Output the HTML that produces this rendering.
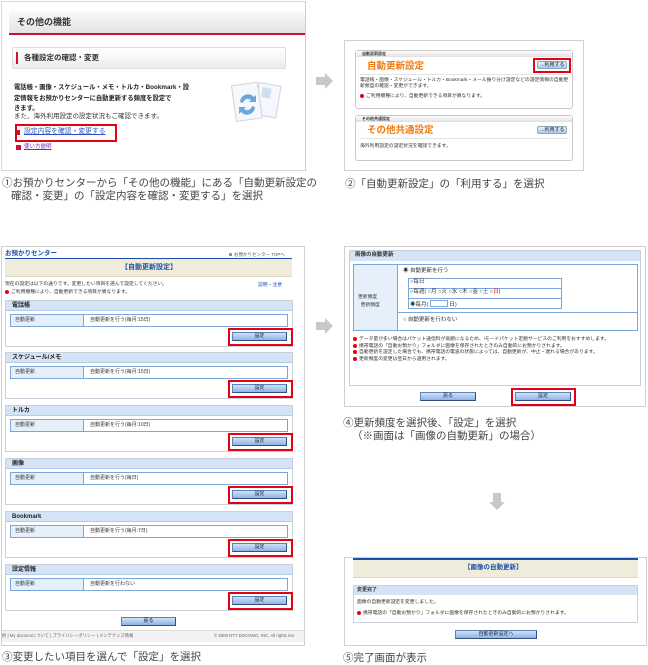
<!DOCTYPE html>
<html><head><meta charset="utf-8"><style>
*{margin:0;padding:0;box-sizing:border-box}
body{width:648px;height:663px;background:#fff;position:relative;overflow:hidden;font-family:"Liberation Sans","Noto Sans CJK JP",sans-serif;color:#333}
.a{position:absolute}
.t{position:absolute;white-space:nowrap;line-height:1}
.cap{font-size:10.5px;color:#444;line-height:13px}
.red{border:2px solid #e60012}
.btn{position:absolute;height:9px;background:linear-gradient(#cfe1f7,#8fb4e4);border:1px solid #5d83b8;border-right-color:#33507a;border-bottom-color:#33507a;font-size:5px;text-align:center;line-height:7px;color:#223}
.sec{position:absolute;left:5px;width:288px;height:47px;border:1px solid #c8d0dc;background:#fff}
.sec .h{height:10px;background:#d4e3f6;font-size:6px;font-weight:bold;line-height:10px;padding-left:6px;color:#222;border-bottom:1px solid #b8cbe6}
.sec .r{position:absolute;left:4px;top:13px;width:278px;height:13px;border:1px solid #7aa6d8;font-size:5px;line-height:11px}
.sec .r span{display:inline-block;width:73px;height:11px;background:#e6f0fb;border-right:1px solid #7aa6d8;padding-left:4px;margin-right:6px}
.ex{display:inline-block;width:6px;height:6px;border-radius:50%;background:#e60012;vertical-align:-1px;margin-right:2px}
</style></head><body>

<!-- Panel 1 -->
<div class="a" style="left:1px;top:1px;width:305px;height:170px;border:1px solid #d8d8d8;border-right-color:#ccc"></div>
<div class="a" style="left:9px;top:11px;width:296px;height:24px;background:linear-gradient(#fafafa,#e4e4e4);border-bottom:2px solid #d0102a"></div>
<div class="t" style="left:17px;top:18px;font-size:9px;font-weight:bold;color:#333">その他の機能</div>
<div class="a" style="left:12px;top:47px;width:274px;height:22px;background:linear-gradient(#fff,#ececec);border:1px solid #ddd;border-radius:2px"></div>
<div class="a" style="left:16px;top:52px;width:2px;height:12px;background:#d0102a"></div>
<div class="t" style="left:24px;top:54px;font-size:7.5px;font-weight:bold">各種設定の確認・変更</div>
<div class="t" style="left:14px;top:83px;font-size:6.3px;font-weight:bold;line-height:10.5px;color:#222">電話帳・画像・スケジュール・メモ・トルカ・Bookmark・設<br>定情報をお預かりセンターに自動更新する頻度を設定で<br>きます。</div>
<div class="t" style="left:14px;top:114px;font-size:6.5px;color:#333">また、海外利用設定の設定状況もご確認できます。</div>
<div class="a red" style="left:15px;top:124px;width:102px;height:18px"></div>
<div class="a" style="left:16px;top:130px;width:4px;height:5px;background:#d0102a"></div>
<div class="t" style="left:24px;top:129px;font-size:6.8px;color:#2b50c8;text-decoration:underline">設定内容を確認・変更する</div>
<div class="a" style="left:16px;top:145px;width:5px;height:5px;background:#d0102a"></div>
<div class="t" style="left:24px;top:145px;font-size:5.5px;color:#7a28b8;text-decoration:underline">使い方説明</div>
<svg class="a" style="left:226px;top:78px" width="56" height="50"><g transform="rotate(10 40 25)"><rect x="30" y="6" width="22" height="32" fill="#f4f7fb" stroke="#cdd4dc"/><rect x="34" y="10" width="9" height="10" fill="#cfdff0"/></g><g transform="rotate(-8 20 25)"><rect x="8" y="6" width="26" height="36" fill="#f6f8fb" stroke="#cdd4dc"/></g><path d="M14 24a8 8 0 0 1 14-5l2-2v7h-7l2-2a5 5 0 0 0-8 3z" fill="#6aa8dc"/><path d="M29 29a8 8 0 0 1-14 5l-2 2v-7h7l-2 2a5 5 0 0 0 8-3z" fill="#6aa8dc"/></svg>
<div class="t cap" style="left:2px;top:177px">①お預かりセンターから「その他の機能」にある「自動更新設定の</div>
<div class="t cap" style="left:11px;top:190px">確認・変更」の「設定内容を確認・変更する」を選択</div>

<svg class="a" style="left:316px;top:73px" width="18" height="16"><path d="M0 4h9V0l8 8-8 8v-4H0z" fill="#c8c8c8"/></svg>

<!-- Panel 2 -->
<div class="a" style="left:344px;top:40px;width:240px;height:131px;border:1px solid #d0d0d0"></div>
<div class="a" style="left:355px;top:50px;width:218px;height:59px;border:1px solid #c8c8c8;border-radius:3px"></div>
<div class="a" style="left:356px;top:51px;width:216px;height:6px;background:linear-gradient(#fff,#e0e0e0)"></div>
<div class="t" style="left:362px;top:52px;font-size:4px;font-weight:bold">自動更新設定</div>
<div class="t" style="left:367px;top:62px;font-size:9.5px;font-weight:bold;color:#f07a10">自動更新設定</div>
<div class="a" style="left:360px;top:74px;width:208px;height:1px;background:#e4e4e4"></div>
<div class="a red" style="left:533px;top:58px;width:38px;height:15px"></div>
<div class="btn" style="left:537px;top:61px;width:30px;height:8px;border-radius:2px;background:linear-gradient(#e8f2fc,#a8ccef);border-color:#8ab">→利用する</div>
<div class="t" style="left:360px;top:78px;font-size:4.8px;line-height:6px;white-space:normal;width:212px">電話帳・画像・スケジュール・トルカ・Bookmark・メール振り分け設定などの設定情報の自動更新頻度の確認・変更ができます。</div>
<div class="t" style="left:360px;top:94px;font-size:4.8px"><span class="ex" style="width:4px;height:4px"></span>ご利用機種により、自動更新できる項目が異なります。</div>
<div class="a" style="left:355px;top:115px;width:218px;height:46px;border:1px solid #c8c8c8;border-radius:3px"></div>
<div class="a" style="left:356px;top:116px;width:216px;height:6px;background:linear-gradient(#fff,#e0e0e0)"></div>
<div class="t" style="left:362px;top:117px;font-size:4px;font-weight:bold">その他共通設定</div>
<div class="t" style="left:367px;top:126px;font-size:9.5px;font-weight:bold;color:#f07a10">その他共通設定</div>
<div class="a" style="left:360px;top:138px;width:208px;height:1px;background:#e4e4e4"></div>
<div class="btn" style="left:537px;top:126px;width:30px;height:8px;border-radius:2px;background:linear-gradient(#e8f2fc,#a8ccef);border-color:#8ab">→利用する</div>
<div class="t" style="left:360px;top:145px;font-size:4.8px">海外利用設定の設定状況を確認できます。</div>
<div class="t cap" style="left:345px;top:178px">②「自動更新設定」の「利用する」を選択</div>

<!-- Panel 3 -->
<div class="a" style="left:1px;top:246px;width:304px;height:400px;border:1px solid #d0d0d0"></div>
<div class="t" style="left:5px;top:251px;font-size:6.5px;font-weight:bold;color:#1c4fa8">お預かりセンター</div>
<div class="t" style="left:229px;top:253px;font-size:4.5px;color:#555"><span style="display:inline-block;width:3px;height:3px;background:#6a9ad6;margin-right:2px"></span>お預かりセンター TOPへ</div>
<div class="a" style="left:5px;top:258px;width:287px;height:1px;background:#1c4fa8"></div>
<div class="a" style="left:5px;top:259px;width:287px;height:18px;background:#efecdc;border-bottom:1px solid #dcd8c0"></div>
<div class="t" style="left:121px;top:264px;font-size:7px;font-weight:bold;color:#1c4fa8">【自動更新設定】</div>
<div class="t" style="left:5px;top:283px;font-size:4.8px">現在の設定は以下の通りです。変更したい項目を選んで設定してください。</div>
<div class="t" style="left:5px;top:290px;font-size:4.8px"><span class="ex" style="width:4px;height:4px"></span>ご利用機種により、自動更新できる項目が異なります。</div>
<div class="t" style="left:258px;top:284px;font-size:4.8px;color:#1c4fa8">説明・注意</div>

<div class="sec" style="top:300px"><div class="h">電話帳</div><div class="r"><span>自動更新</span>自動更新を行う(毎月:15日)</div></div>
<div class="sec" style="top:352px"><div class="h">スケジュール/メモ</div><div class="r"><span>自動更新</span>自動更新を行う(毎月:15日)</div></div>
<div class="sec" style="top:405px"><div class="h">トルカ</div><div class="r"><span>自動更新</span>自動更新を行う(毎月:10日)</div></div>
<div class="sec" style="top:458px"><div class="h">画像</div><div class="r"><span>自動更新</span>自動更新を行う(毎日)</div></div>
<div class="sec" style="top:511px"><div class="h">Bookmark</div><div class="r"><span>自動更新</span>自動更新を行う(毎月:7日)</div></div>
<div class="sec" style="top:564px"><div class="h">設定情報</div><div class="r"><span>自動更新</span>自動更新を行わない</div></div>

<div class="btn" style="left:232px;top:332px;width:55px">設定</div><div class="a red" style="left:228px;top:328px;width:65px;height:18px"></div>
<div class="btn" style="left:232px;top:384px;width:55px">設定</div><div class="a red" style="left:228px;top:380px;width:65px;height:18px"></div>
<div class="btn" style="left:232px;top:437px;width:55px">設定</div><div class="a red" style="left:228px;top:433px;width:65px;height:18px"></div>
<div class="btn" style="left:232px;top:490px;width:55px">設定</div><div class="a red" style="left:228px;top:486px;width:65px;height:18px"></div>
<div class="btn" style="left:232px;top:543px;width:55px">設定</div><div class="a red" style="left:228px;top:539px;width:65px;height:18px"></div>
<div class="btn" style="left:232px;top:596px;width:55px">設定</div><div class="a red" style="left:228px;top:592px;width:65px;height:18px"></div>
<div class="btn" style="left:121px;top:617px;width:55px">戻る</div>
<div class="a" style="left:2px;top:630px;width:302px;height:12px;background:#f2f2f2;border-top:1px solid #ddd"></div>
<div class="t" style="left:2px;top:634px;font-size:4.3px;color:#666">約 | My docomoについて | プライバシーポリシー | メンテナンス情報</div>
<div class="t" style="left:214px;top:634px;font-size:4.3px;color:#666">© 2009 NTT DOCOMO, INC. All rights res</div>
<div class="t cap" style="left:2px;top:651px">③変更したい項目を選んで「設定」を選択</div>

<svg class="a" style="left:316px;top:318px" width="18" height="16"><path d="M0 4h9V0l8 8-8 8v-4H0z" fill="#c8c8c8"/></svg>

<!-- Panel 4 -->
<div class="a" style="left:344px;top:246px;width:302px;height:161px;border:1px solid #d0d0d0"></div>
<div class="a" style="left:349px;top:250px;width:292px;height:136px;border:1px solid #c8d0dc"></div>
<div class="a" style="left:350px;top:251px;width:290px;height:10px;background:#d4e3f6"></div>
<div class="t" style="left:355px;top:253px;font-size:5.5px;font-weight:bold">画像の自動更新</div>
<div class="a" style="left:353px;top:264px;width:285px;height:67px;border:1px solid #7aa6d8"></div>
<div class="a" style="left:354px;top:265px;width:44px;height:65px;background:#e6f0fb;border-right:1px solid #7aa6d8"></div>
<div class="t" style="left:358px;top:294px;font-size:4.8px;line-height:8px">更新頻度<br>&nbsp;&nbsp;更新頻度</div>
<div class="a" style="left:398px;top:312px;width:239px;height:1px;background:#7aa6d8"></div>
<div class="t" style="left:403px;top:269px;font-size:5.5px">◉ 自動更新を行う</div>
<div class="a" style="left:408px;top:278px;width:154px;height:31px;border:1px solid #7aa6d8"></div>
<div class="a" style="left:408px;top:288px;width:154px;height:1px;background:#7aa6d8"></div>
<div class="a" style="left:408px;top:298px;width:154px;height:1px;background:#7aa6d8"></div>
<div class="t" style="left:410px;top:280px;font-size:5.5px">○毎日</div>
<div class="t" style="left:410px;top:290px;font-size:5.5px">○毎週( ○月 ○火 ○水 ○木 ○金 ○<span style="color:#1c4fa8">土</span> ○<span style="color:#e60012">日</span>)</div>
<div class="t" style="left:410px;top:300px;font-size:5.5px">◉毎月( <span style="display:inline-block;width:18px;height:7px;border:1px solid #7aa6d8;vertical-align:-1px"></span> 日)</div>
<div class="t" style="left:403px;top:318px;font-size:5.5px">○ 自動更新を行わない</div>
<div class="t" style="left:353px;top:337px;font-size:4.8px;line-height:6.5px;white-space:normal;width:285px"><span class="ex" style="width:4px;height:4px"></span>データ量が多い場合はパケット通信料が高額になるため、iモードパケット定額サービスのご利用をおすすめします。<br><span class="ex" style="width:4px;height:4px"></span>携帯電話の「自動お預かり」フォルダに画像を保存されたときのみ自動的にお預かりされます。<br><span class="ex" style="width:4px;height:4px"></span>自動更新を設定した場合でも、携帯電話の電波の状態によっては、自動更新が、中止・遅れる場合があります。<br><span class="ex" style="width:4px;height:4px"></span>更新頻度の変更は翌日から適用されます。</div>
<div class="btn" style="left:420px;top:392px;width:56px">戻る</div>
<div class="btn" style="left:515px;top:392px;width:56px">設定</div>
<div class="a red" style="left:511px;top:388px;width:65px;height:18px"></div>
<div class="t cap" style="left:343px;top:417px">④更新頻度を選択後、「設定」を選択</div>
<div class="t cap" style="left:352px;top:430px">（※画面は「画像の自動更新」の場合）</div>

<svg class="a" style="left:489px;top:493px" width="16" height="18"><path d="M4 0h8v9h4l-8 8-8-8h4z" fill="#c8c8c8"/></svg>

<!-- Panel 5 -->
<div class="a" style="left:344px;top:557px;width:303px;height:89px;border:1px solid #d0d0d0"></div>
<div class="a" style="left:353px;top:558px;width:285px;height:2px;background:#1c4fa8"></div>
<div class="a" style="left:353px;top:560px;width:285px;height:18px;background:#efecdc;border-bottom:1px solid #dcd8c0"></div>
<div class="t" style="left:464px;top:565px;font-size:6.5px;font-weight:bold;color:#1c4fa8">【画像の自動更新】</div>
<div class="a" style="left:353px;top:585px;width:285px;height:38px;border:1px solid #c8d0dc"></div>
<div class="a" style="left:354px;top:586px;width:283px;height:9px;background:#d4e3f6"></div>
<div class="t" style="left:357px;top:588px;font-size:5px;font-weight:bold">変更完了</div>
<div class="t" style="left:357px;top:601px;font-size:4.8px">画像の自動更新設定を変更しました。</div>
<div class="t" style="left:357px;top:611px;font-size:4.8px"><span class="ex" style="width:4px;height:4px"></span>携帯電話の「自動お預かり」フォルダに画像を保存されたときのみ自動的にお預かりされます。</div>
<div class="btn" style="left:455px;top:630px;width:82px">自動更新設定へ</div>
<div class="t cap" style="left:343px;top:652px">⑤完了画面が表示</div>
</body></html>
